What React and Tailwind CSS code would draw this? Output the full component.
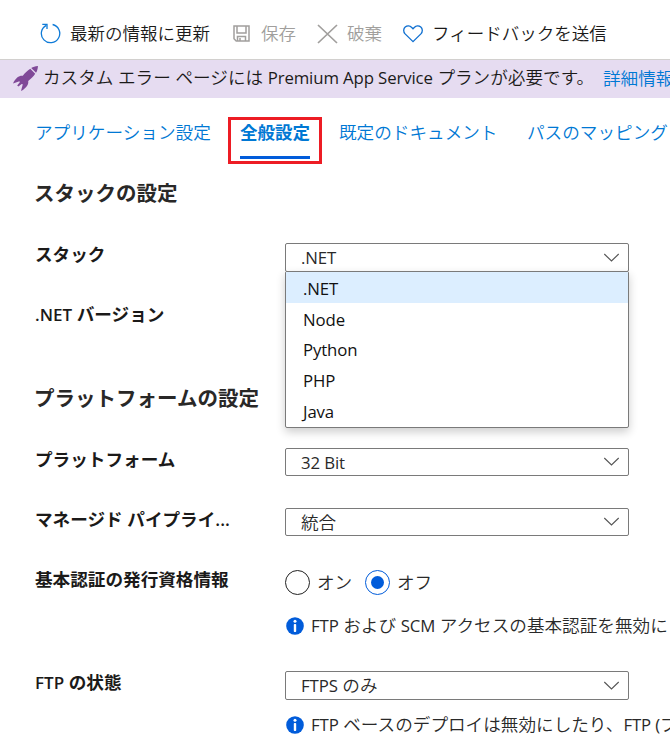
import React from "react";

function Chevron() {
  return (
    <svg className="mr-[8px] shrink-0" width="17" height="10" viewBox="0 0 17 10" fill="none" stroke="#555" strokeWidth="1.1">
      <path d="M1.3 1 L8.5 8 L15.7 1" />
    </svg>
  );
}

function Select({ children, tall }) {
  return (
    <div className={`flex w-[344px] items-center justify-between rounded-[2px] border border-[#7a7a7a] bg-white pl-[15px] text-[#292929] ${tall ? "h-[29px]" : "h-[28px]"}`}>
      <span className="whitespace-nowrap leading-[26px]">{children}</span>
      <Chevron />
    </div>
  );
}

function En({ children, bold }) {
  return <span className={bold ? "text-[17px] font-semibold" : "text-[16.8px] font-normal tracking-[-0.12px]"}>{children}</span>;
}

function Row({ label, height, children }) {
  return (
    <div className={`flex shrink-0 ${height}`}>
      <div className="-mt-px h-6 w-[250px] shrink-0 whitespace-nowrap font-semibold leading-6 text-[#1b1a19]">{label}</div>
      <div className="relative shrink-0">{children}</div>
    </div>
  );
}

function Radio({ checked, children }) {
  return (
    <div className="flex items-center">
      <span className={`flex size-[25px] items-center justify-center rounded-full border ${checked ? "border-[#015cda]" : "border-[#222]"}`}>
        {checked && <span className="size-[13px] rounded-full bg-[#015cda]" />}
      </span>
      <span className="ml-[7px] w-[48px] whitespace-nowrap">{children}</span>
    </div>
  );
}

function Info({ children }) {
  return (
    <div className="flex h-6 items-center whitespace-nowrap leading-6">
      <svg className="ml-[1px] mr-[7px] shrink-0" width="18" height="18" viewBox="0 0 18 18">
        <circle cx="9" cy="9" r="8.8" fill="#015cda" />
        <circle cx="9" cy="4.3" r="1.5" fill="#fff" />
        <rect x="7.8" y="7" width="2.4" height="8" rx="0.8" fill="#fff" />
      </svg>
      <span className="-mt-[2px]">{children}</span>
    </div>
  );
}

const options = [".NET", "Node", "Python", "PHP", "Java"];

export default function App() {
  return (
    <div className="flex h-[738px] w-full flex-col overflow-hidden bg-white font-['Open_Sans','Noto_Sans_CJK_JP',sans-serif] text-[17.62px] font-[350] text-[#292929]">
      <div className="flex h-[60px] shrink-0 items-center whitespace-nowrap border-b border-[#d2d0ce] pl-10 pt-[8px] text-[17.5px] leading-6 text-[#1b1a19]">
        <svg width="21" height="21" viewBox="0 0 21 21" fill="none" stroke="#0f7bd8" strokeWidth="1.3">
          <path d="M12.6 1.5 A9.2 9.2 0 1 1 6.3 2.3" />
          <path d="M2.3 1.3 H7 V6" />
        </svg>
        <span className="-mt-px ml-[9px] w-[140px]">最新の情報に更新</span>
        <svg className="ml-[23px]" width="17" height="17" viewBox="0 0 17 17" fill="none" stroke="#a19f9d" strokeWidth="1.5">
          <path d="M1 1 H16 V16 H3.2 L1 13.8 Z" />
          <path d="M4 1 V8 H13 V1 M4.5 16 V11.5 H12.5 V16 M7 13 V16" />
        </svg>
        <span className="-mt-px ml-[11px] w-[35px] text-[#a19f9d]">保存</span>
        <svg className="ml-[21px]" width="21" height="20" viewBox="0 0 21 20" fill="none" stroke="#a19f9d" strokeWidth="1.7">
          <path d="M1 1 L20 19 M20 1 L1 19" />
        </svg>
        <span className="-mt-px ml-[9px] w-[35px] text-[#a19f9d]">破棄</span>
        <svg className="ml-[21px]" width="20" height="18" viewBox="0 0 20 18" fill="none" stroke="#0f6fd0" strokeWidth="1.3">
          <path d="M10 16.6 L2.1 8.9 C0 6.6 .5 3.5 2.2 2 C4.2 .4 7 .7 8.5 2.3 L10 3.8 L11.5 2.3 C13 .7 15.8 .4 17.8 2 C19.5 3.5 20 6.6 17.9 8.9 Z" />
        </svg>
        <span className="-mt-px ml-[9px]">フィードバックを送信</span>
      </div>

      <div className="flex h-[38px] shrink-0 items-center whitespace-nowrap bg-[#e6dcf1] pl-[13px] leading-6 text-[#1b1a19]">
        <svg className="-mt-px shrink-0" width="25" height="25" viewBox="0 0 25 25" fill="#804998">
          <path d="M25 0 C22 .3 20 .8 18.2 2 L23 6.8 C24.2 5 24.7 3 25 0 Z" />
          <path d="M17.3 2.8 C14.4 4.6 11.8 7.2 9.8 9.8 C6.5 9.3 2.8 11.4 0 17.5 L6.5 15.2 L6.8 16.2 L4.2 19.4 L5.4 20.6 L8.7 18 L9.8 18.3 L8 25 C13.8 21.8 15.8 18 15.2 14.9 C18 12.7 20.5 10.3 22.2 7.7 Z" />
        </svg>
        <span className="-mt-[3px] ml-[5px] w-[550px]">
          カスタム エラー ページには <En>Premium App Service</En> プランが必要です。
        </span>
        <span className="-mt-[3px] ml-[10px] text-[#0078d4]">詳細情報</span>
      </div>

      <div className="mt-[19px] flex h-[47px] shrink-0 whitespace-nowrap pl-[35px] leading-[30px] text-[#0078d4]">
        <span className="w-[193px]">アプリケーション設定</span>
        <div className="h-[47px] w-[94px] border-[3px] border-[#ed1c24] px-[9px]">
          <div className="h-[39px] w-[70px] border-b-[3px] border-[#015cda] text-[17.5px] font-bold leading-[24px]">全般設定</div>
        </div>
        <span className="ml-[17px] w-[188px]">既定のドキュメント</span>
        <span>パスのマッピング</span>
      </div>

      <div className="flex grow flex-col pl-[35px]">
        <h2 className="-ml-px h-[79px] shrink-0 whitespace-nowrap pt-[14px] text-[20.5px] font-semibold leading-[30px] text-[#292827]">スタックの設定</h2>
        <Row label="スタック" height="h-[60px]">
          <Select tall><En>.NET</En></Select>
          <ul className="absolute left-0 top-[28px] z-10 h-[157px] w-[344px] rounded-[2px] border border-[#7a7a7a] bg-white shadow-[0_4px_10px_rgba(0,0,0,0.2)]">
            {options.map((name, i) => (
              <li key={name} className={`flex h-[30.8px] items-center pl-[17px] pt-[2px] text-[#111] ${i === 0 ? "bg-[#dceeff]" : ""}`}>
                <En>{name}</En>
              </li>
            ))}
          </ul>
        </Row>
        <Row label={<><En bold>.NET</En> バージョン</>} height="h-[60px]" />
        <h2 className="-ml-px h-[85px] shrink-0 whitespace-nowrap pt-[20px] text-[20.5px] font-semibold leading-[30px] text-[#292827]">プラットフォームの設定</h2>
        <Row label="プラットフォーム" height="h-[60px]">
          <Select><En>32 Bit</En></Select>
        </Row>
        <Row label="マネージド パイプライ..." height="h-[60px]">
          <Select>統合</Select>
        </Row>
        <Row label="基本認証の発行資格情報" height="h-[103px]">
          <div className="flex h-[46px] pt-[2px] leading-[25px]">
            <div className="flex h-[25px]">
              <Radio>オン</Radio>
              <Radio checked>オフ</Radio>
            </div>
          </div>
          <Info><En>FTP</En> および <En>SCM</En> アクセスの基本認証を無効に</Info>
        </Row>
        <Row label={<><En bold>FTP</En> の状態</>} height="h-[67px]">
          <Select tall><En>FTPS</En> のみ</Select>
          <div className="mt-[13px]">
            <Info><En>FTP</En> ベースのデプロイは無効にしたり、<En>FTP (</En>プ</Info>
          </div>
        </Row>
      </div>
    </div>
  );
}
